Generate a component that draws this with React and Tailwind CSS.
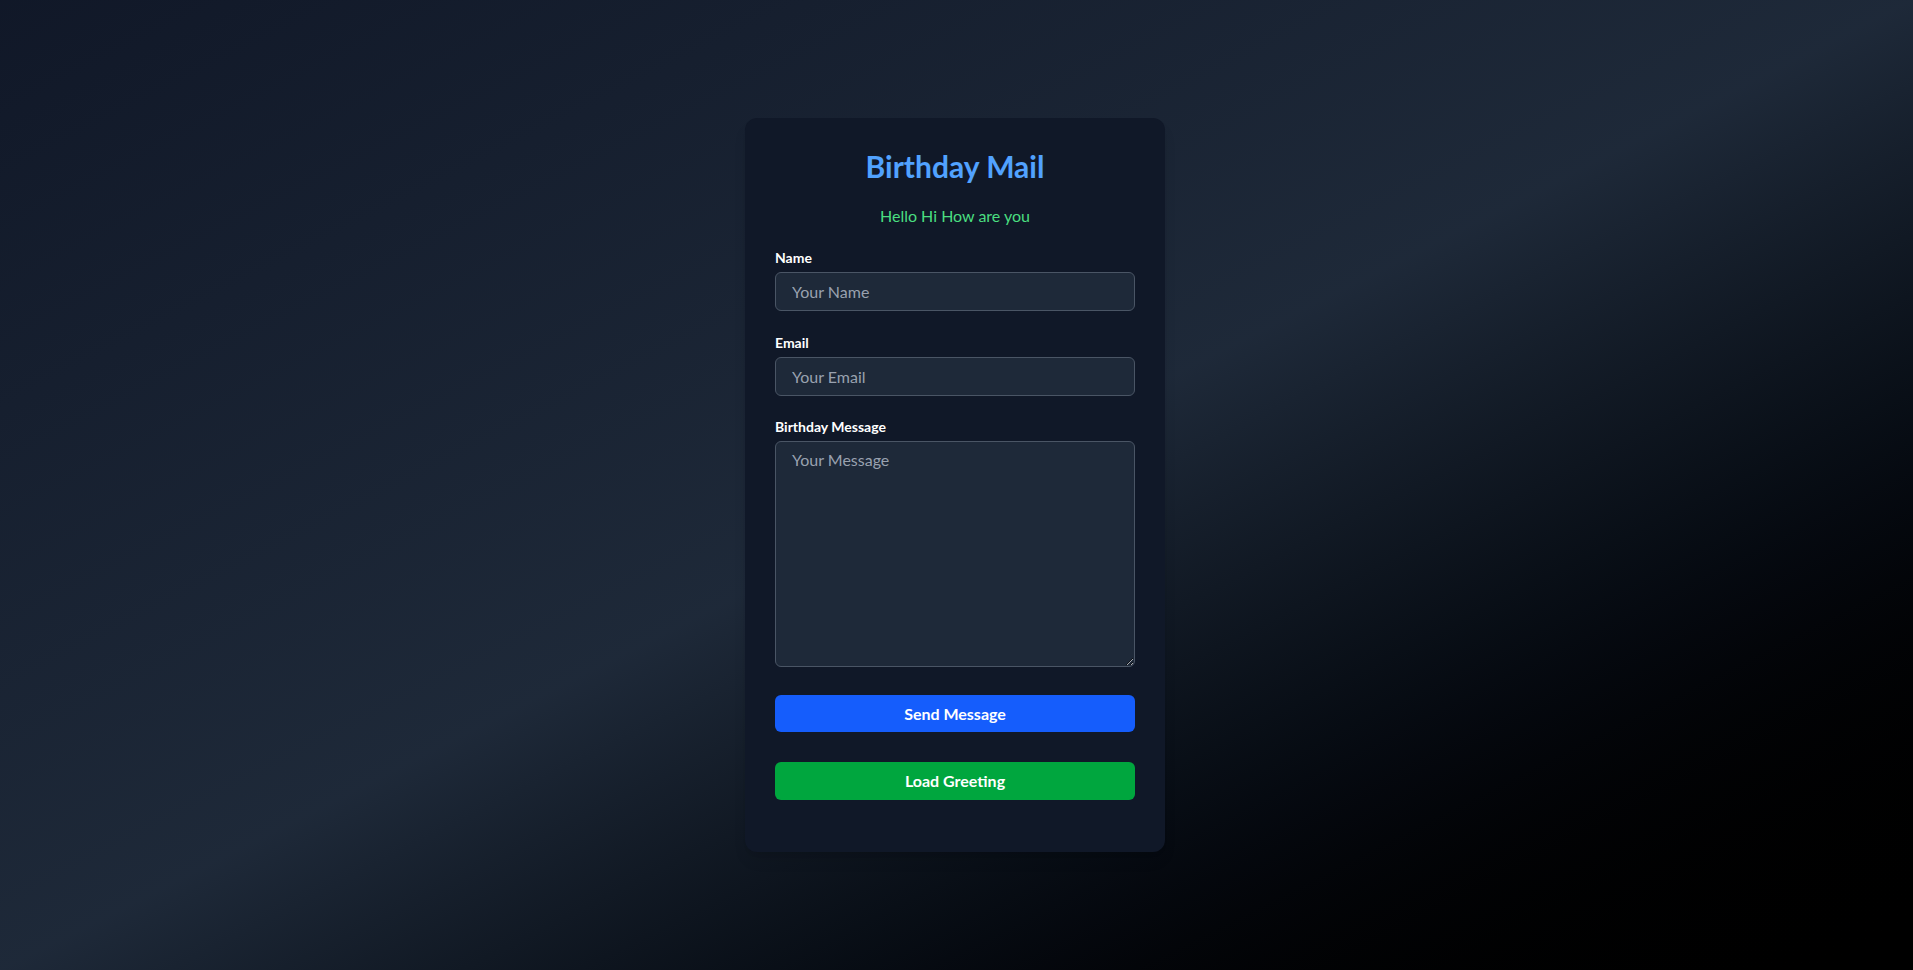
import { useState } from "react";

function Field({ label, children, className = "" }) {
	return (
		<div className={className}>
			<label className="block text-sm font-bold text-white mb-1">{label}</label>
			{children}
		</div>
	);
}

export default function App() {
	const [name, setName] = useState("");
	const [email, setEmail] = useState("");
	const [message, setMessage] = useState("");

	return (
		<div className="min-h-screen flex items-start justify-center pr-[3px] bg-linear-to-br from-gray-900 via-gray-800 to-black font-['Segoe_UI','Lato',sans-serif]">
			<div className="mt-[118px] w-[420px] bg-gray-900 rounded-xl shadow-lg px-[30px] pt-[30px] pb-[52px]">
				<h1 className="text-3xl font-bold text-blue-400 text-center">Birthday Mail</h1>
				<p className="text-[#4ade80] text-center mt-5">Hello Hi How are you</p>

				<Field label="Name" className="mt-5">
					<input
						type="text"
						value={name}
						onChange={(e) => setName(e.target.value)}
						placeholder="Your Name"
						className="w-full h-[39px] px-4 bg-gray-800 border border-gray-600 rounded-md text-white placeholder-gray-400 outline-none"
					/>
				</Field>

				<Field label="Email" className="mt-[22px]">
					<input
						type="email"
						value={email}
						onChange={(e) => setEmail(e.target.value)}
						placeholder="Your Email"
						className="w-full h-[39px] px-4 bg-gray-800 border border-gray-600 rounded-md text-white placeholder-gray-400 outline-none"
					/>
				</Field>

				<Field label="Birthday Message" className="mt-[21px]">
					<textarea
						value={message}
						onChange={(e) => setMessage(e.target.value)}
						placeholder="Your Message"
						className="block w-full h-[226px] px-4 py-[6px] bg-gray-800 border border-gray-600 rounded-md text-white placeholder-gray-400 outline-none"
					/>
				</Field>

				<button className="mt-7 w-full h-[37px] rounded-md bg-blue-600 text-white font-bold">
					Send Message
				</button>
				<button className="mt-[30px] w-full h-[38px] rounded-md bg-green-600 text-white font-bold">
					Load Greeting
				</button>
			</div>
		</div>
	);
}
